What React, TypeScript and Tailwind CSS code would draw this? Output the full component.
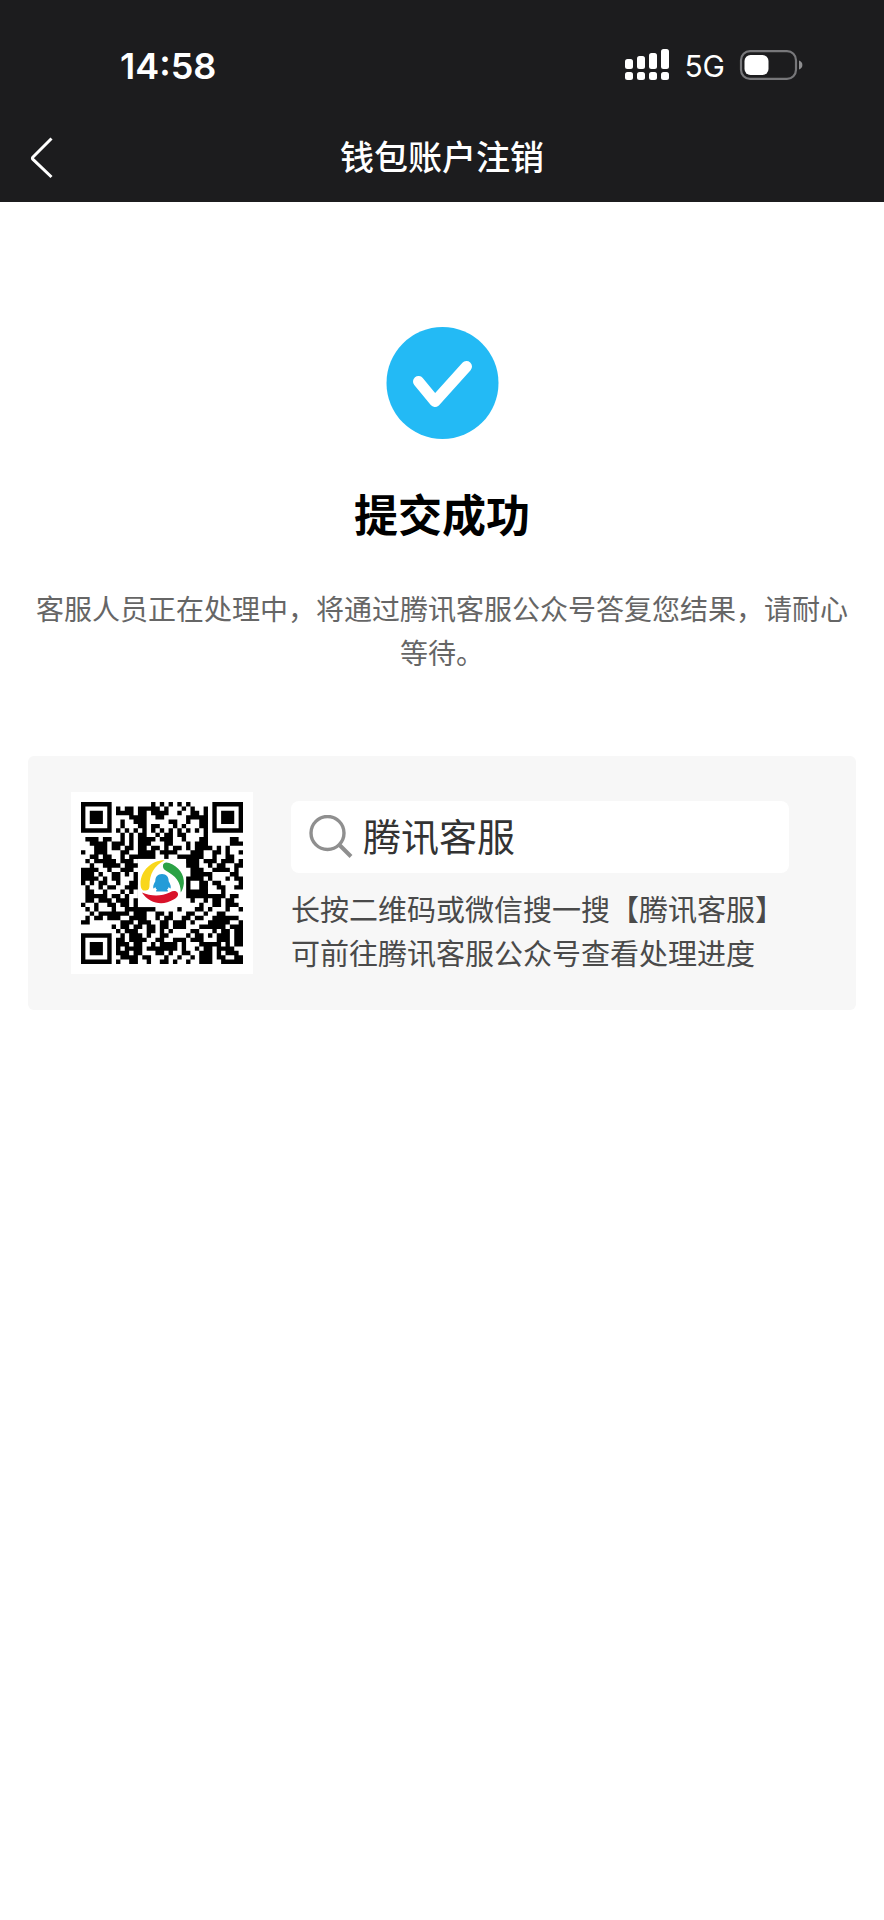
const QR_ROWS = [
  "1111111000000000101010101000001111111",
  "1000001010110111110100010100101000001",
  "1011101011110110111100100110101011101",
  "1011101000011110011000001111101011101",
  "1011101001001110000011001001101011101",
  "1000001001000110110001010001101000001",
  "1111111010101010101010101010101111111",
  "0000000001010110010110110000100000000",
  "0111011001010111101110010001100000110",
  "0011110111010111000110001011100000111",
  "0001110110110110110101101011110101000",
  "1001110001100111101111000111001101001",
  "0011011001011111100100111111001001100",
  "0101111101110100010010011110111011101",
  "0010011110111000000000001110010110011",
  "1111001001110010000000000111001111010",
  "1110100110101100000000000111110000110",
  "1111010110001100000000001111010001011",
  "1010110010011100000000001001101100001",
  "0100101100111000000000001001100110011",
  "0110010001010110000000001111100010000",
  "0111110110100110000000001111111110110",
  "0110111011101110000000000100101101100",
  "1001001101101110000000000001001101110",
  "0101000100111111100000100011010001001",
  "0010111111101110011010001100100110000",
  "0101101110011110010110011011001111110",
  "1100000001110111001101110100011111001",
  "0000000101101101101101110001111110111",
  "0000000010111001101010000110001011011",
  "1111111001011101001100001011010111011",
  "1000001011011110011001110111000111011",
  "1011101011101100101111010001111101011",
  "1011101010111101111111010010110111100",
  "1011101011101100011010011001110101110",
  "1000001001111011000100100101110110011",
  "1111111010011001001101001001110011111",
];

function StatusBar() {
  return (
    <div className="flex h-[114px] items-center justify-between pt-[18px] pr-[81px] pl-[120px] text-white">
      <time className="text-[36px] leading-[44px] font-semibold">14:58</time>
      <div className="flex items-center gap-[14px]">
        <svg className="h-[34px] w-[46px]" viewBox="0 0 46 34" fill="currentColor" role="img" aria-label="信号">
          <rect x="1" y="10" width="8" height="10" rx="2.5" />
          <rect x="13" y="7" width="8" height="13" rx="2.5" />
          <rect x="25" y="4" width="8" height="16" rx="2.5" />
          <rect x="37" y="0" width="8" height="20" rx="2.5" />
          <rect x="1" y="23" width="8" height="8" rx="2.5" />
          <rect x="13" y="23" width="8" height="8" rx="2.5" />
          <rect x="25" y="23" width="8" height="8" rx="2.5" />
          <rect x="37" y="23" width="8" height="8" rx="2.5" />
        </svg>
        <span className="text-[30px] leading-[36px]">5G</span>
        <svg className="h-[32px] w-[64px]" viewBox="0 0 64 32" role="img" aria-label="电量">
          <rect x="2" y="1.2" width="55" height="27.6" rx="9" fill="none" stroke="#77777a" strokeWidth="2.2" />
          <rect x="5.5" y="5" width="24" height="20" rx="6" fill="#fff" />
          <path d="M60 10.5c2.2.7 3.4 2.3 3.4 4.5s-1.2 3.8-3.4 4.500z" fill="#8e8e90" />
        </svg>
      </div>
    </div>
  );
}

function NavBar() {
  return (
    <div className="grid h-[88px] grid-cols-[1fr_auto_1fr] items-center px-[28px]">
      <button type="button" aria-label="返回" className="w-[28px]">
        <svg className="h-[42px] w-[28px]" viewBox="0 0 28 42" fill="none" stroke="#fff" strokeWidth="3">
          <path d="M23.500 1.500 5 20q-1.200 1.200 0 2.400L23.500 40" />
        </svg>
      </button>
      <h1 className="text-[34px] leading-[44px] font-medium text-white">钱包账户注销</h1>
    </div>
  );
}

function QrCode() {
  const cells = QR_ROWS.flatMap((row, y) =>
    [...row].map((v, x) => (v === "1" ? `M${x} ${y}h1v1h-1z` : "")),
  ).join("");
  return (
    <div className="shrink-0 bg-white p-[10px]">
      <svg className="size-[162px]" viewBox="0 0 37 37" role="img" aria-label="腾讯客服二维码">
        <path d={cells} fill="#000" shapeRendering="geometricPrecision" />
        <rect x="13" y="13" width="11" height="11" fill="#fff" />
        <svg x="13.400" y="13.200" width="10.200" height="10.200" viewBox="0 0 100 100">
          <path d="M56 1C26 1 2 25 2 53c0 10 3 16 9 16 8 0 11-4 11-11 0-26 10-44 34-57z" fill="#f9d71c" />
          <path d="M52 14c0-7 6-10 14-7 22 8 34 26 33 46-1 8-3 15-7 20C92 49 80 36 60 25c-5-2-8-6-8-11z" fill="#2ba245" />
          <path d="M5 73c20 9 44 9 62 0 8-4 15-4 18 1 3 6-2 11-9 15-25 15-54 9-71-16z" fill="#d9122a" />
          <path d="M50 32c-10 0-15 7-15 16-4 7-6 13-4 16 2 0 3-2 4-3 1 3 2 5 4 6-4 2-3 4 1 4h20c4 0 5-2 1-4 2-1 3-3 4-6 1 1 2 3 4 3 2-3 0-9-4-16 0-9-5-16-15-16z" fill="#249cd8" />
        </svg>
      </svg>
    </div>
  );
}

export default function App() {
  return (
    <div className="min-h-screen bg-white font-[Inter,'Noto_Sans_CJK_SC',sans-serif]">
      <header className="bg-[#1c1c1e]">
        <StatusBar />
        <NavBar />
      </header>
      <main className="flex flex-col items-center px-[28px] pt-[124px]">
        <svg className="size-[114px]" viewBox="0 0 114 114" role="img" aria-label="成功">
          <circle cx="57.500" cy="57" r="56" fill="#23baf5" />
          <path d="M33.500 55.500 50 75.500 81.500 40.500" fill="none" stroke="#fff" strokeWidth="11" strokeLinecap="round" strokeLinejoin="round" />
        </svg>
        <h2 className="mt-[44px] text-[44px] leading-[64px] font-bold text-black">提交成功</h2>
        <p className="mt-[40px] text-center text-[28px] leading-[44px] text-[#666]">
          客服人员正在处理中，将通过腾讯客服公众号答复您结果，请耐心等待。
        </p>
        <section className="mt-[80px] flex w-full items-start gap-[38px] rounded-[6px] bg-[#f7f7f7] py-[36px] pr-[67px] pl-[43px]">
          <QrCode />
          <div className="min-w-0 flex-1 pt-[9px]">
            <div className="flex h-[72px] items-center gap-[10px] rounded-[8px] bg-white pl-[18px]">
              <svg className="size-[44px]" viewBox="0 0 44 44" fill="none" stroke="#8f8f8f" strokeWidth="3.4" aria-hidden="true">
                <circle cx="18.500" cy="18" r="16.500" />
                <path d="M30 29.500 42 41.500" strokeWidth="4" />
              </svg>
              <span className="text-[38px] leading-[48px] text-[#333]">腾讯客服</span>
            </div>
            <p className="mt-[16px] -mb-[9px] text-[29px] leading-[44px] whitespace-nowrap text-[#4a4a4a]">
              长按二维码或微信搜一搜【腾讯客服】
              <br />
              可前往腾讯客服公众号查看处理进度
            </p>
          </div>
        </section>
      </main>
    </div>
  );
}
